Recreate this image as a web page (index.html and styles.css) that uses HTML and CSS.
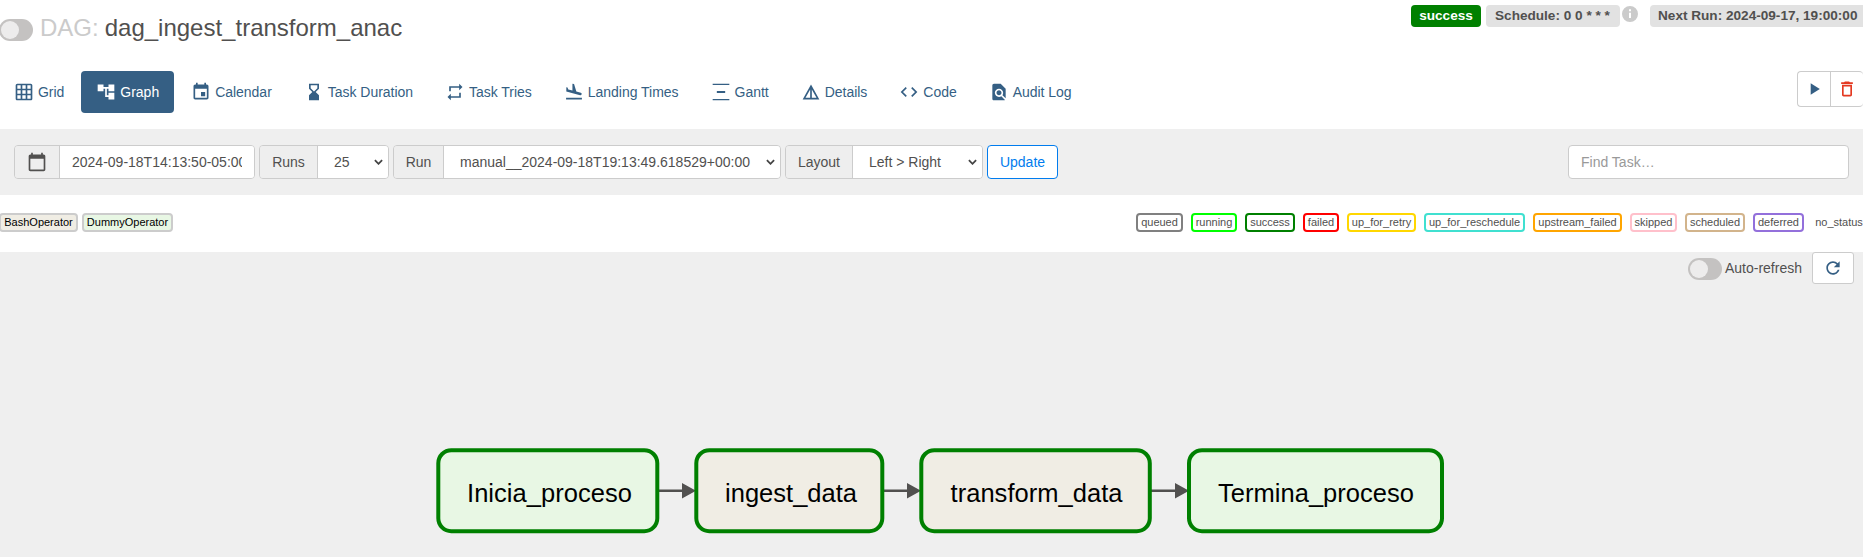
FILE: index.html
```html
<!DOCTYPE html>
<html lang="en">
<head>
<meta charset="utf-8">
<title>dag_ingest_transform_anac - Graph</title>
<link rel="stylesheet" href="styles.css">
</head>
<body>
<header class="header">
  <div class="title"><span class="switch"></span><span class="title-label">DAG:</span><span class="title-name">dag_ingest_transform_anac</span></div>
  <div class="status">
    <span class="badge badge-success">success</span>
    <span class="badge badge-schedule">Schedule: 0 0 * * *</span>
    <svg class="info" viewBox="0 0 24 24"><path d="M12 0a12 12 0 100 24 12 12 0 000-24zm1.500 18h-3v-8h3zm0-10h-3V5h3z"/></svg>
    <span class="badge badge-next">Next Run: 2024-09-17, 19:00:00</span>
  </div>
</header>
<nav class="nav">
  <a class="tab"><svg viewBox="0 0 24 24"><path d="M20 2H4c-1.100 0-2 .9-2 2v16c0 1.100.9 2 2 2h16c1.100 0 2-.9 2-2V4c0-1.100-.9-2-2-2zM8 20H4v-4h4v4zm0-6H4v-4h4v4zm0-6H4V4h4v4zm6 12h-4v-4h4v4zm0-6h-4v-4h4v4zm0-6h-4V4h4v4zm6 12h-4v-4h4v4zm0-6h-4v-4h4v4zm0-6h-4V4h4v4z"/></svg>Grid</a>
  <a class="tab tab-active"><svg viewBox="0 0 24 24"><path d="M22 11V3h-7v3H9V3H2v8h7V8h2v10h4v3h7v-8h-7v3h-2V8h2v3z"/></svg>Graph</a>
  <a class="tab"><svg viewBox="0 0 24 24"><path d="M17 12h-5v5h5v-5zM16 1v2H8V1H6v2H5c-1.110 0-1.990.9-1.990 2L3 19c0 1.100.89 2 2 2h14c1.100 0 2-.9 2-2V5c0-1.100-.9-2-2-2h-1V1h-2zm3 18H5V8h14v11z"/></svg>Calendar</a>
  <a class="tab"><svg viewBox="0 0 24 24"><path d="M18 22l-.01-6L14 12l3.990-4.010L18 2H6v6l4 4-4 3.990V22h12zM8 7.500V4h8v3.500l-4 4-4-4z"/></svg>Task Duration</a>
  <a class="tab"><svg viewBox="0 0 24 24"><path d="M7 7h10v3l4-4-4-4v3H5v6h2V7zm10 10H7v-3l-4 4 4 4v-3h12v-6h-2v4z"/></svg>Task Tries</a>
  <a class="tab"><svg viewBox="0 0 24 24"><path d="M2.500 19h19v2h-19zm16.840-3.150c.8.210 1.620-.26 1.840-1.060.21-.8-.26-1.620-1.060-1.840l-5.310-1.420-2.760-9.020L10.120 2v8.280L5.150 8.950l-.93-2.320-1.450-.39v5.170l16.570 4.440z"/></svg>Landing Times</a>
  <a class="tab"><svg viewBox="0 0 24 24"><path d="M2 2.200h20v1.500H2zM7 10.900h10v2.400H7zM2 20.300h20v1.500H2z"/></svg>Gantt</a>
  <a class="tab"><svg viewBox="0 0 24 24"><path d="M12 3L2 21h20L12 3zm1 5.920L18.600 19H13V8.920zm-2 0V19H5.400L11 8.920z"/></svg>Details</a>
  <a class="tab"><svg viewBox="0 0 24 24"><path d="M9.400 16.600L4.800 12l4.600-4.600L8 6l-6 6 6 6 1.400-1.400zm5.200 0l4.600-4.600-4.600-4.600L16 6l6 6-6 6-1.400-1.400z"/></svg>Code</a>
  <a class="tab"><svg viewBox="0 0 24 24"><path d="M20 19.590V8l-6-6H6c-1.100 0-1.990.9-1.990 2L4 20c0 1.100.89 2 1.990 2H18c.45 0 .85-.15 1.190-.4l-4.430-4.430c-.8.520-1.740.83-2.760.83-2.760 0-5-2.240-5-5s2.240-5 5-5 5 2.240 5 5c0 1.020-.31 1.960-.83 2.750L20 19.590zM9 13c0 1.660 1.340 3 3 3s3-1.340 3-3-1.340-3-3-3-3 1.340-3 3z"/></svg>Audit Log</a>
  <div class="actions">
    <span class="action"><svg viewBox="0 0 24 24"><path d="M8 5v14l11-7z"/></svg></span>
    <span class="action action-delete"><svg viewBox="0 0 24 24"><path d="M6 19c0 1.100.9 2 2 2h8c1.100 0 2-.9 2-2V7H6v12zM8 9h8v10H8V9zm7.500-5l-1-1h-5l-1 1H5v2h14V4z"/></svg></span>
  </div>
</nav>
<form class="filters">
  <div class="group group-date"><span class="addon"><svg viewBox="0 0 24 24"><path d="M20 3h-1V1h-2v2H7V1H5v2H4c-1.100 0-2 .9-2 2v16c0 1.100.9 2 2 2h16c1.100 0 2-.9 2-2V5c0-1.100-.9-2-2-2zm0 18H4V8h16v13z"/></svg></span><input class="field date" type="text" value="2024-09-18T14:13:50-05:00"></div>
  <div class="group group-runs"><span class="addon">Runs</span><div class="field select">25<svg class="chev" viewBox="0 0 10 6"><path d="M1 1l4 4 4-4"/></svg></div></div>
  <div class="group group-run"><span class="addon">Run</span><div class="field select">manual__2024-09-18T19:13:49.618529+00:00<svg class="chev" viewBox="0 0 10 6"><path d="M1 1l4 4 4-4"/></svg></div></div>
  <div class="group group-layout"><span class="addon">Layout</span><div class="field select">Left &gt; Right<svg class="chev" viewBox="0 0 10 6"><path d="M1 1l4 4 4-4"/></svg></div></div>
  <span class="update">Update</span>
  <span class="search">Find Task…</span>
</form>
<section class="legend">
  <div class="operators"><span class="op op-bash">BashOperator</span><span class="op op-dummy">DummyOperator</span></div>
  <div class="states">
    <span class="state queued">queued</span><span class="state running">running</span><span class="state success">success</span><span class="state failed">failed</span><span class="state retry">up_for_retry</span><span class="state reschedule">up_for_reschedule</span><span class="state upstream">upstream_failed</span><span class="state skipped">skipped</span><span class="state scheduled">scheduled</span><span class="state deferred">deferred</span><span class="state none">no_status</span>
  </div>
</section>
<main class="graph">
  <div class="refresh"><span class="switch"></span><span class="refresh-label">Auto-refresh</span><span class="refresh-btn"><svg viewBox="0 0 24 24"><path d="M17.650 6.350C16.200 4.900 14.210 4 12 4c-4.420 0-7.990 3.580-7.990 8s3.570 8 7.990 8c3.730 0 6.840-2.550 7.730-6h-2.080c-.82 2.330-3.040 4-5.650 4-3.310 0-6-2.690-6-6s2.690-6 6-6c1.660 0 3.140.69 4.220 1.780L13 11h7V4l-2.350 2.350z"/></svg></span></div>
  <svg class="canvas" width="1863" height="273" viewBox="0 284 1863 273">
    <g class="edges">
      <path d="M659 490.700H684M884 490.700H909M1151 490.700H1177"/>
      <path class="head" d="M682 483l14 7.700-14 7.700zM907 483l14 7.700-14 7.700zM1175 483l14 7.700-14 7.700z"/>
    </g>
    <g class="node dummy"><rect x="438.300" y="450.200" width="219" height="81" rx="13"/><text x="467" y="502" textLength="165">Inicia_proceso</text></g>
    <g class="node bash"><rect x="696.300" y="450.200" width="186" height="81" rx="13"/><text x="725" y="502" textLength="132">ingest_data</text></g>
    <g class="node bash"><rect x="921.300" y="450.200" width="228.500" height="81" rx="13"/><text x="950.500" y="502" textLength="172">transform_data</text></g>
    <g class="node dummy"><rect x="1189" y="450.200" width="253" height="81" rx="13"/><text x="1218" y="502" textLength="196">Termina_proceso</text></g>
  </svg>
</main>
</body>
</html>
```
FILE: styles.css
```css
* { box-sizing: border-box; }
body { margin: 0; width: 1863px; height: 557px; overflow: hidden; background: #fff; color: #51504f; font: 14px/20px "Liberation Sans", Arial, sans-serif; }
svg { display: block; fill: currentColor; flex: none; }
.header { display: flex; justify-content: space-between; height: 71px; padding-top: 5px; }
.title { display: flex; align-items: center; height: 46px; margin-left: -1px; font-size: 24px; }
.switch { width: 34px; height: 22px; border-radius: 11px; background: #c4c2c1; padding: 2px; margin-top: 4px; flex: none; }
.switch::before { content: ""; display: block; width: 18px; height: 18px; border-radius: 50%; background: #edecec; }
.title-label { color: #cbcbcb; margin: 0 6px 0 7px; }
.status { display: flex; align-items: flex-start; flex: none; width: 452px; }
.badge { height: 22px; line-height: 21px; border-radius: 4px; background: #e2e2e2; font-size: 13.600px; font-weight: 700; white-space: nowrap; flex: none; }
.badge-success { width: 70px; margin-right: 5px; background: #008000; color: #fff; text-align: center; }
.badge-schedule { width: 134px; padding-left: 9px; }
.info { width: 16px; height: 16px; margin: 1px 12px 0 2px; color: #cbcbcb; }
.badge-next { width: 220px; padding-left: 8px; }
.nav { display: flex; gap: 2px; height: 58px; margin-left: -1px; color: #355f84; }
.tab { display: flex; align-items: center; gap: 4px; height: 42px; padding: 0 15px; border-radius: 4px; letter-spacing: -.025px; white-space: nowrap; }
.tab svg { width: 20px; height: 20px; }
.tab-active { background: #355f84; color: #fff; }
.actions { display: flex; height: 36px; width: 66px; margin-left: auto; border: 1px solid #ccc; border-right: 0; border-radius: 4px; }
.action { display: flex; width: 32px; align-items: center; justify-content: center; }
.action svg { width: 20px; height: 20px; }
.action-delete { width: 33px; border-left: 1px solid #ccc; color: #e43921; }
.filters { display: flex; gap: 4px; height: 66px; padding: 16px 14px 0; background: #efefef; }
.group { display: flex; height: 34px; border: 1px solid #ccc; border-radius: 4px; overflow: hidden; }
.addon { display: flex; align-items: center; justify-content: center; background: #eee; border-right: 1px solid #ccc; flex: none; }
.addon svg { width: 20px; height: 20px; }
.field { display: flex; align-items: center; flex: 1; background: #fff; padding: 0 12px; min-width: 0; white-space: nowrap; }
.date { border: 0; color: inherit; font: inherit; }
.select { justify-content: space-between; padding: 0 5px 0 16px; }
.chev { width: 9px; height: 6px; fill: none; stroke: #444; stroke-width: 2; }
.group-date { width: 241px; }
.group-date .addon { width: 45px; }
.group-runs { width: 130px; }
.group-runs .addon { width: 58px; }
.group-run { width: 388px; }
.group-run .addon { width: 50px; }
.group-layout { width: 198px; }
.group-layout .addon { width: 67px; }
.update { width: 71px; height: 34px; line-height: 32px; text-align: center; border: 1px solid #017cee; border-radius: 4px; background: #fff; color: #017cee; }
.search { width: 281px; height: 34px; margin-left: auto; padding-left: 12px; line-height: 32px; border: 1px solid #ccc; border-radius: 4px; background: #fff; color: #999; }
.legend { display: flex; justify-content: space-between; height: 57px; padding-top: 18px; font-size: 11px; }
.operators, .states { display: flex; }
.op, .state { height: 19px; line-height: 15px; border: 2px solid; border-radius: 4px; text-align: center; white-space: nowrap; }
.op { border-color: #ccc; color: #000; }
.op-bash { width: 79px; margin: 0 4px 0 -1px; background: #f0ede4; }
.op-dummy { width: 91px; background: #e8f7e4; }
.states { gap: 8px; margin-right: -3px; }
.queued { width: 47px; border-color: #808080; }
.running { width: 46px; border-color: #0f0; }
.success { width: 50px; border-color: #008000; }
.failed { width: 36px; border-color: #f00; }
.retry { width: 69px; border-color: #ffd700; }
.reschedule { width: 101px; border-color: #40e0d0; }
.upstream { width: 89px; border-color: #ffa500; }
.skipped { width: 47px; border-color: #ffc0cb; }
.scheduled { width: 60px; border-color: #d2b48c; }
.deferred { width: 51px; border-color: #9370db; }
.none { width: 54px; border-color: transparent; }
.graph { height: 305px; background: #efefef; }
.refresh { display: flex; justify-content: flex-end; height: 32px; padding-right: 9px; }
.refresh .switch { margin-top: 6px; }
.refresh-label { margin: 6px 10px 0 3px; }
.refresh-btn { display: flex; align-items: center; justify-content: center; width: 42px; height: 32px; border: 1px solid #ccc; border-radius: 3px; background: #fff; color: #355f84; }
.refresh-btn svg { width: 20px; height: 20px; }
.edges path { fill: none; stroke: #51504f; stroke-width: 2.500px; }
.edges .head { fill: #51504f; stroke: none; }
.node rect { stroke: #008000; stroke-width: 4px; }
.node text { fill: #000; font-size: 25.500px; }
.dummy rect { fill: #e8f7e4; }
.bash rect { fill: #f0ede4; }
```
